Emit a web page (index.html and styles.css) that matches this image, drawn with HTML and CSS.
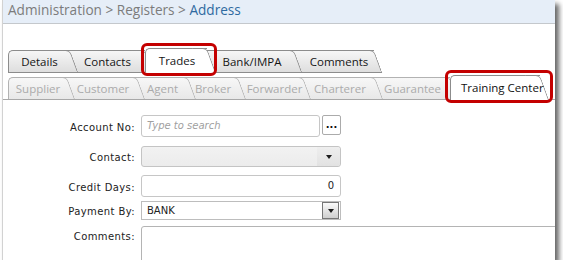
FILE: index.html
```html
<!DOCTYPE html>
<html>
<head>
<meta charset="utf-8">
<link rel="stylesheet" href="styles.css">
</head>
<body>
<div class="window">
  <div class="crumbs">Administration &gt; Registers &gt; <span class="crumb-current">Address</span></div>

  <div class="tabs tabs-main">
    <div class="tab first w-details">Details</div>
    <div class="tab w-contacts">Contacts</div>
    <div class="tab selected w-trades">Trades</div>
    <div class="tab w-bank">Bank/IMPA</div>
    <div class="tab w-comments">Comments</div>
  </div>

  <div class="tabs tabs-sub">
    <div class="tab first w-supplier">Supplier</div>
    <div class="tab w-customer">Customer</div>
    <div class="tab w-agent">Agent</div>
    <div class="tab w-broker">Broker</div>
    <div class="tab w-forwarder">Forwarder</div>
    <div class="tab w-charterer">Charterer</div>
    <div class="tab w-guarantee">Guarantee</div>
    <div class="tab selected w-training">Training Center</div>
  </div>

  <div class="form">
    <div class="row row-account">
      <div class="label">Account No:</div>
      <div class="input input-account"><span class="placeholder">Type to search</span></div>
      <div class="dots-btn">...</div>
    </div>
    <div class="row row-contact">
      <div class="label">Contact:</div>
      <div class="select-disabled">
        <div class="select-disabled-arrow"><span class="caret"></span></div>
      </div>
    </div>
    <div class="row row-credit">
      <div class="label">Credit Days:</div>
      <div class="input input-number">0</div>
    </div>
    <div class="row row-payment">
      <div class="label">Payment By:</div>
      <div class="select">
        <span class="select-value">BANK</span>
        <div class="select-btn"><span class="caret"></span></div>
      </div>
    </div>
    <div class="row row-comments">
      <div class="label label-top">Comments:</div>
      <div class="textarea"></div>
    </div>
  </div>

  <div class="highlight hl-trades"></div>
  <div class="highlight hl-training"></div>
</div>
</body>
</html>
```
FILE: styles.css
```css
* { box-sizing: border-box; }

html, body {
  margin: 0;
  padding: 0;
  background: #ffffff;
  overflow: hidden;
}

.window {
  position: relative;
  margin-left: 2px;
  width: 553px;
  height: 260px;
  background: #ffffff;
  border-left: 1px solid #d2d2d2;
  box-shadow: 4px 4px 5px rgba(0, 0, 0, 0.6);
  overflow: hidden;
}

.crumbs {
  height: 24px;
  padding-left: 5px;
  background: #e6eef8;
  border-bottom: 1px solid #c4c8cc;
  font-family: "Open Sans", sans-serif;
  font-size: 13.6px;
  line-height: 20px;
  color: #7c7c7c;
}

.crumb-current { color: #2f6aa0; }

/* ---------- tabs ---------- */
.tabs {
  display: flex;
  align-items: flex-end;
  padding-left: 5px;
  font-family: "Open Sans", sans-serif;
  font-size: 11.5px;
}

.tabs-main {
  margin-top: 24px;
  height: 25px;
}

.tabs-sub {
  margin-top: 2px;
  height: 25px;
  border-bottom: 1px solid #a8a8a8;
}

.tab {
  position: relative;
  height: 23px;
  line-height: 21px;
  text-align: center;
  white-space: nowrap;
  border-top: 1px solid #8c8c8c;
  border-bottom: 1px solid #8c8c8c;
  background: linear-gradient(#f6f6f6, #dedede);
  color: #151515;
}

.tab::after {
  content: "";
  position: absolute;
  top: -1px;
  bottom: -1px;
  right: 0;
  width: 14px;
  border-top: 1px solid #8c8c8c;
  border-right: 1px solid #8c8c8c;
  border-bottom: 1px solid #8c8c8c;
  border-top-right-radius: 5px;
  background: inherit;
  transform: skewX(20deg);
  transform-origin: top right;
  z-index: -1;
}

.tab.first {
  border-left: 1px solid #8c8c8c;
  border-top-left-radius: 5px;
}

.tab:nth-child(1) { z-index: 9; }
.tab:nth-child(2) { z-index: 8; }
.tab:nth-child(3) { z-index: 7; }
.tab:nth-child(4) { z-index: 6; }
.tab:nth-child(5) { z-index: 5; }
.tab:nth-child(6) { z-index: 4; }
.tab:nth-child(7) { z-index: 3; }
.tab:nth-child(8) { z-index: 2; }

.tab.selected {
  z-index: 20;
  height: 25px;
  line-height: 23px;
  background: #ffffff;
  border-left: 1px solid #8c8c8c;
  border-top-left-radius: 5px;
  border-bottom-color: #ffffff;
}

.tab.selected::after { border-bottom-color: #ffffff; }

.tabs-sub .tab {
  height: 22px;
  border-bottom: none;
  border-top-color: #b2b2b2;
  background: linear-gradient(#f7f7f7, #e8e8e8);
  color: #ababab;
}

.tabs-sub .tab::after {
  bottom: 0;
  border-bottom: none;
  border-top-color: #b2b2b2;
  border-right-color: #b2b2b2;
}

.tabs-sub .tab.first { border-left-color: #b2b2b2; }

.tabs-sub .tab.selected {
  height: 25px;
  margin-bottom: -1px;
  line-height: 23px;
  background: #ffffff;
  color: #111111;
  border-top-color: #8c8c8c;
  border-left-color: #8c8c8c;
}

.tabs-sub .tab.selected::after {
  border-top-color: #8c8c8c;
  border-right-color: #8c8c8c;
}

.w-details { width: 62px; }
.w-contacts { width: 75px; }
.w-trades { width: 62px; padding-left: 1px; }
.w-bank { width: 87px; padding-left: 3px; }
.w-comments { width: 80px; padding-left: 10px; }

.w-supplier { width: 59px; }
.w-customer { width: 70px; padding-left: 2px; }
.w-agent { width: 51px; }
.w-broker { width: 50px; }
.w-forwarder { width: 65px; padding-left: 8px; }
.w-charterer { width: 72px; padding-left: 2px; }
.w-guarantee { width: 75px; }
.w-training { width: 90px; padding-left: 10px; }

/* ---------- form ---------- */
.form {
  padding-top: 15px;
  font-family: "DejaVu Sans", sans-serif;
  font-size: 10px;
  color: #222222;
}

.row {
  display: flex;
  align-items: center;
}

.row > * { flex-shrink: 0; }

.row-account { height: 22px; margin-bottom: 9px; }
.row-contact { height: 21px; margin-bottom: 8px; }
.row-credit { height: 22px; margin-bottom: 4px; }
.row-payment { height: 19px; margin-bottom: 6px; }
.row-comments { align-items: flex-start; }

.label {
  width: 132px;
  margin-right: 6px;
  padding-top: 2px;
  text-align: right;
  letter-spacing: 0.4px;
  white-space: nowrap;
}

.label-top { padding-top: 5px; }

.input {
  height: 22px;
  border: 1px solid #c6c6c6;
  border-radius: 3px;
  background: #ffffff;
  padding: 0 5px;
  line-height: 20px;
}

.input-account { width: 179px; }

.placeholder {
  font-style: italic;
  color: #a0a0a0;
}

.dots-btn {
  width: 19px;
  height: 20px;
  margin-left: 2px;
  align-self: flex-start;
  border: 1px solid #ababab;
  border-radius: 2px;
  background: #ffffff;
  font-weight: bold;
  font-size: 10px;
  line-height: 17px;
  text-align: center;
  color: #111111;
}

.select-disabled {
  display: flex;
  justify-content: flex-end;
  width: 200px;
  height: 21px;
  border: 1px solid #c4c4c4;
  border-radius: 3px;
  background: linear-gradient(#f2f2f2, #ececec);
}

.select-disabled-arrow {
  display: flex;
  align-items: center;
  justify-content: center;
  width: 23px;
  background: linear-gradient(#eeeeee, #e2e2e2);
  border-radius: 0 3px 3px 0;
}

.caret {
  width: 0;
  height: 0;
  border-left: 3.5px solid transparent;
  border-right: 3.5px solid transparent;
  border-top: 4px solid #1c1c1c;
}

.input-number {
  width: 200px;
  text-align: right;
  padding-right: 6px;
}

.select {
  display: flex;
  align-items: center;
  justify-content: space-between;
  width: 200px;
  height: 19px;
  border: 1px solid #bdbdbd;
  background: #ffffff;
  padding: 0 1px 0 5px;
}

.select-btn {
  display: flex;
  align-items: center;
  justify-content: center;
  width: 17px;
  height: 17px;
  border: 1px solid #777777;
  background: linear-gradient(#fafafa, #cfcfcf);
}

.textarea {
  width: 440px;
  height: 60px;
  border: 1px solid #b4b4b4;
  border-top-left-radius: 3px;
  background: #ffffff;
}

/* ---------- annotations ---------- */
.highlight {
  position: absolute;
  border: 3px solid #c40000;
  border-radius: 6px;
  z-index: 50;
}

.hl-trades {
  left: 138px;
  top: 43px;
  width: 76px;
  height: 33px;
}

.hl-training {
  left: 442px;
  top: 70px;
  width: 108px;
  height: 33px;
}
```
